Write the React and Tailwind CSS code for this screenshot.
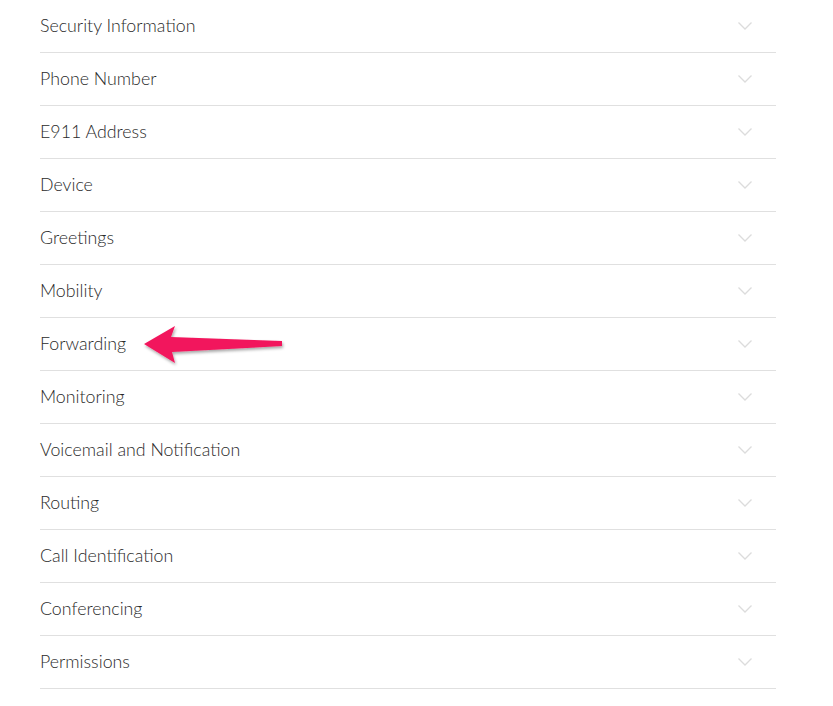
const items = [
  'Security Information',
  'Phone Number',
  'E911 Address',
  'Device',
  'Greetings',
  'Mobility',
  'Forwarding',
  'Monitoring',
  'Voicemail and Notification',
  'Routing',
  'Call Identification',
  'Conferencing',
  'Permissions',
];

const Chevron = () => (
  <svg width="16" height="10" viewBox="0 0 16 10" fill="none" className="mr-[23px] mt-[1px]">
    <path d="M1.5 1.5 L8 8 L14.5 1.5" stroke="#dcdcdc" strokeWidth="1.3" />
  </svg>
);

const App = () => {
  return (
    <div className="relative min-h-[706px] w-[833px] bg-white font-['Lato','Noto_Sans',sans-serif]">
      <div className="ml-10 w-[736px]">
        {items.map((label) => (
          <div
            key={label}
            className="flex h-[53px] items-center justify-between border-b border-[#e0e0e0] pb-[2px] text-[17.8px] font-light text-[#2a2a2a]"
          >
            <span>{label}</span>
            <Chevron />
          </div>
        ))}
      </div>

      {/* annotation arrow */}
      <svg
        className="pointer-events-none absolute left-0 top-0"
        width="833"
        height="706"
        viewBox="0 0 833 706"
      >
        <defs>
          <filter id="sh" x="-20%" y="-50%" width="140%" height="200%">
            <feDropShadow dx="1" dy="2" stdDeviation="1.5" floodColor="#000" floodOpacity="0.35" />
          </filter>
        </defs>
        <polygon
          points="144,344 175,326 171,337 282,341 282,346 172,352 175,363"
          fill="#f2175d"
          filter="url(#sh)"
        />
      </svg>
    </div>
  );
};

export default App;
